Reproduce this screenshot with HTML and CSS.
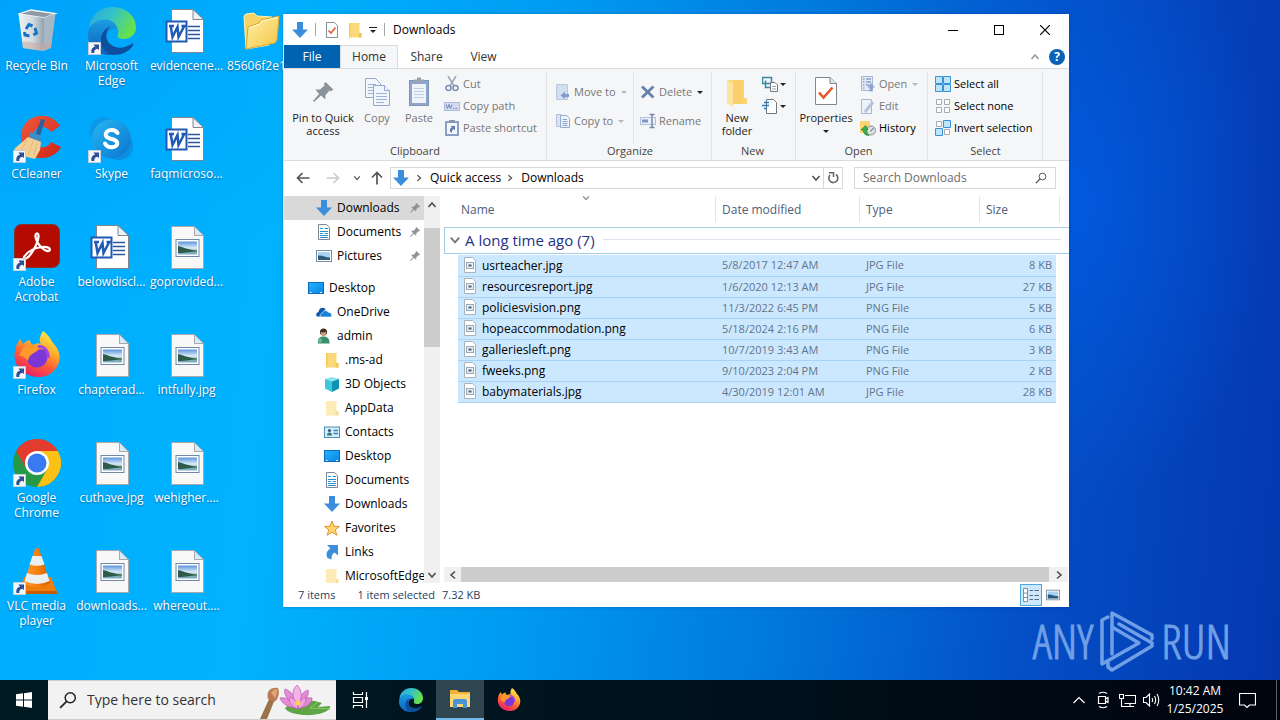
FILE: index.html
```html
<!DOCTYPE html>
<html lang="en">
<head>
<meta charset="utf-8">
<title>Downloads</title>
<link rel="stylesheet" href="styles.css">
</head>
<body>
<svg class="sprite" width="0" height="0" aria-hidden="true">
  <defs>
    <linearGradient id="gEdgeA" x1="0" y1="0" x2="1" y2="0.4"><stop offset="0" stop-color="#2aa7dd"/><stop offset=".5" stop-color="#33c3c9"/><stop offset="1" stop-color="#66e04f"/></linearGradient>
    <linearGradient id="gEdgeB" x1="0" y1="0" x2="0" y2="1"><stop offset="0" stop-color="#1b9de2"/><stop offset="1" stop-color="#0f5fb8"/></linearGradient>
    <linearGradient id="gBin" x1="0" y1="0" x2="1" y2="0"><stop offset="0" stop-color="#eef2f4"/><stop offset=".55" stop-color="#d3dadf"/><stop offset="1" stop-color="#93a3b1"/></linearGradient>
    <linearGradient id="gFold" x1="0" y1="0" x2="1" y2="1"><stop offset="0" stop-color="#fff2a8"/><stop offset="1" stop-color="#f3c443"/></linearGradient>
    <linearGradient id="gFox" x1=".8" y1="0" x2=".3" y2="1"><stop offset="0" stop-color="#fff04a"/><stop offset=".35" stop-color="#ffb02c"/><stop offset=".65" stop-color="#ff5b36"/><stop offset="1" stop-color="#e61b6d"/></linearGradient>
    <linearGradient id="gSkype" x1="0" y1="0" x2="1" y2="1"><stop offset="0" stop-color="#27b8f2"/><stop offset="1" stop-color="#0a74cf"/></linearGradient>
    <linearGradient id="gSky" x1="0" y1="0" x2="0" y2="1"><stop offset="0" stop-color="#5b93dc"/><stop offset=".5" stop-color="#dcecf8"/><stop offset=".75" stop-color="#7fb0a0"/><stop offset="1" stop-color="#7fa9d4"/></linearGradient>
    <linearGradient id="gDesk" x1="0" y1="0" x2="1" y2="1"><stop offset="0" stop-color="#22b5f7"/><stop offset="1" stop-color="#0b84e8"/></linearGradient>
    <linearGradient id="gCone" x1="0" y1="0" x2="1" y2="0"><stop offset="0" stop-color="#ff9a2e"/><stop offset=".6" stop-color="#f47b05"/><stop offset="1" stop-color="#d15c00"/></linearGradient>
    <linearGradient id="gRed" x1="0" y1="0" x2="1" y2="1"><stop offset="0" stop-color="#f05a3c"/><stop offset="1" stop-color="#cf2418"/></linearGradient>
  </defs>

  <symbol id="shortcut" viewBox="0 0 13 13"><rect x=".5" y=".5" width="12" height="12" fill="#f4f7fa" stroke="#c6ced8"/><path d="M3.500 11C2.800 7.500 4.500 5 7 4.800L5.500 2.500H11V8L9.300 6.700C7 7.200 6 8.500 6.300 11Z" fill="#2f4f96"/></symbol>

  <symbol id="bin" viewBox="0 0 48 48"><path d="M5.500 7 18 3 42.500 6.500 31 11Z" fill="#8e9aa5" stroke="#f3f6f8" stroke-width="1.300"/><path d="M5.500 7 31 11 30 44 10 41Z" fill="url(#gBin)"/><path d="M31 11 42.500 6.500 38 41 30 44Z" fill="#a9b7c4"/><path d="M9.500 34 30 37 38 34.500 37.500 41 30 44 10 41Z" fill="#c9a99c" opacity=".55"/><g fill="none" stroke="#1673c8" stroke-width="3"><path d="M13 22 16 17.500 19.500 19"/><path d="M22 21 23.500 26 20.500 28"/><path d="M16.500 29 12 28 11.500 25"/></g></symbol>

  <symbol id="edge" viewBox="0 0 48 48"><path d="M1 23C1 9 12 0 24.500 0 38 0 48 9 48 20.500 48 28 42 32 36 32 31 32 28.500 30 30 27 31.500 23 28 14 18 14 9 14 3 18 1 23Z" fill="url(#gEdgeA)"/><path d="M0 26C1 17 9 12.500 17 12.500 24 12.500 29 17 29 22 24 20 19 24 19 30 19 38 25 44 32 44 29 47 25 48 22 48 10 48-1 39 0 26Z" fill="url(#gEdgeB)"/><path d="M22 20C15 26 17 38 30 40.500 36 41.500 41 38.500 44 36.500 45 36 46 37 45 38.500 41 45 33 48 26 48 17 47 12 39 13 31 14 25 18 21 22 20Z" fill="#0c4f9c"/></symbol>

  <symbol id="word" viewBox="0 0 48 48"><path d="M8.500 2.500H30L40.500 12.500V45.500H8.500Z" fill="#fff" stroke="#7c8791"/><path d="M30 2.500V12.500H40.500Z" fill="#eef2f6" stroke="#7c8791"/><path d="M25 19.500H37M25 23.500H37M25 27.500H37M25 31.500H37" stroke="#2b579a" stroke-width="1.300"/><rect x="3.500" y="14.500" width="20" height="20" fill="#fff" stroke="#1f5bb5" stroke-width="2"/><path d="M6 19H11M7.800 19.500 9.500 30 14.500 20 15.500 30 21 19.500M18.500 19H23" stroke="#1f5bb5" stroke-width="2.500" fill="none"/></symbol>

  <symbol id="bigfolder" viewBox="0 0 48 48"><path d="M6 9 8 7 16 6 19 9 34 10 36 15 31 38 8 42Z" fill="#f5d365" stroke="#fff3b8"/><path d="M8 42 10 20 21 16 23 13 41 9 39 33 37 36Z" fill="url(#gFold)" stroke="#d9a72f"/><path d="M11 21 22 17 24 14 40 10.500" fill="none" stroke="#fffbe0"/></symbol>

  <symbol id="ccleaner" viewBox="0 0 48 48"><path d="M47 11C41 2 33 0 26 1 15 2 8 11 8 22 9 37 18 44 29 43 38 43 45 38 48 32L38 27C36 31 32 33 28 32 22 31 20 27 20 22 20 16 24 12 29 12 33 12 36 14 38 17Z" fill="url(#gRed)"/><path d="M28 4 32 5 27 21 22 20Z" fill="#2f5f98"/><path d="M16 17 27 20 29 28 18 26Z" fill="#3f8ec8"/><path d="M15 22 28 27 27 35 22 44 10 41 1 34Z" fill="#f3cf94"/><path d="M14 25 8 36M20 26 15 40M24 28 21 41" stroke="#e3b877"/></symbol>

  <symbol id="skype" viewBox="0 0 48 48"><circle cx="16" cy="16" r="14" fill="#0c98e8"/><circle cx="31" cy="31" r="14" fill="#0b90e2"/><circle cx="23.500" cy="24" r="19.500" fill="url(#gSkype)"/><path d="M29.500 18C28 15.500 25.500 14.800 23 15 19.500 15.200 17.500 17.300 17.800 20 18.200 25.500 29.500 22.500 29.300 28.500 29 33 19.500 34 17 28.500" fill="none" stroke="#fff" stroke-width="4" stroke-linecap="round"/></symbol>

  <symbol id="acrobat" viewBox="0 0 48 48"><rect x="1.500" y="1.500" width="45" height="43" rx="7" fill="#b30b00" stroke="#87322d"/><path d="M11 34C14 29 21 25 29 24 35 23.500 38 25.500 36.500 27.500 33 30 24 22 22.500 14 22 9 26 9 25.500 14 24.500 22 17 34 13 35.500 11.500 36 10.500 35 11 34Z" fill="none" stroke="#fff" stroke-width="2.200"/></symbol>

  <symbol id="firefox" viewBox="0 0 48 48"><path d="M30 0C36 4 38 9 40 12 45 17 48 24 46 31 43 41 34 47 24 46 11 45 1 36 1.500 23 2 17 4 12 7 8L10 13C13 10 16 9 17 9 17 11 18 13 20 14 24 12 26 12 28 13 25 9 28 3 30 0Z" fill="url(#gFox)"/><circle cx="24" cy="26" r="10.500" fill="#7c35d6"/><path d="M10 17C15 12 27 13 31 19 27 17 24 19 23 21 20 22 16 24 15 30 12 26 8 24 6 25Z" fill="#ff9a2a"/><path d="M25 16C30 14 36 20 35 27" stroke="#a044e6" stroke-width="3" fill="none"/></symbol>

  <symbol id="chrome" viewBox="0 0 48 48"><circle cx="24" cy="24" r="24" fill="#279847"/><path d="M3.200 12A24 24 0 0 1 44.800 12H24L13.600 30Z" fill="#e33b2e"/><path d="M24 12H44.800A24 24 0 0 1 24 48L34.400 30Z" fill="#fbc116"/><circle cx="24" cy="24" r="12" fill="#fff"/><circle cx="24" cy="24" r="9.500" fill="#3a7af0"/></symbol>

  <symbol id="vlc" viewBox="0 0 48 48"><path d="M11 30H38L44 46H5Z" fill="#ef7c0c"/><path d="M5 44H44V47H5Z" fill="#c75b00"/><path d="M22 2Q24 0 26 2L37 36Q24 44 11 36Z" fill="url(#gCone)"/><path d="M19.500 9H28.500L31.500 17.500Q24 20 16.500 17.500Z" fill="#eceff2"/><path d="M14 26Q24 30 34 26L36.500 34Q24 40 11.500 34Z" fill="#eceff2"/></symbol>

  <symbol id="image" viewBox="0 0 48 48"><path d="M8.500 3.500H31.500L40.500 12.500V45.500H8.500Z" fill="#f8f8f9" stroke="#a9a9ad"/><path d="M31.500 3.500V12.500H40.500Z" fill="#d5ecf8" stroke="#a9a9ad"/><rect x="13" y="16.500" width="23" height="17" fill="#fff" stroke="#7287a4"/><rect x="15" y="18.500" width="19" height="13" fill="url(#gSky)"/><path d="M15 23C20 24 25 27 34 27.500V28.500C27 28.500 24 30 15 30Z" fill="#2c5c48"/></symbol>

  <symbol id="down" viewBox="0 0 16 16"><path d="M5 0H11V7.500H16L8 16 0 7.500H5Z" fill="#3b8edb"/></symbol>
  <symbol id="folder" viewBox="0 0 16 16"><path d="M2 1H12.500V11H14.500V15.500H2Z" fill="#fbd978"/><path d="M2 1H3.500V15.500H2Z" fill="#f3ca5c"/><path d="M11.500 11H14.500V15.500H11.500Z" fill="#f0c65a"/></symbol>
  <symbol id="palefolder" viewBox="0 0 16 16"><path d="M2 1H12.500V11H14.500V15.500H2Z" fill="#fdebb8"/><path d="M11.500 11H14.500V15.500H11.500Z" fill="#f6dfa3"/></symbol>
  <symbol id="doc" viewBox="0 0 16 16"><path d="M2.500.5H10.500L13.500 3.500V15.500H2.500Z" fill="#fff" stroke="#7b8791"/><path d="M4 4.500H7M8.500 4.500H12M4 7.500H12M4 9.500H7M8.500 9.500H12M4 11.500H12M4 13.500H12" stroke="#2e8ecb"/></symbol>
  <symbol id="pic" viewBox="0 0 16 16"><rect x=".5" y="2.500" width="15" height="11" fill="#fff" stroke="#7b8da0"/><rect x="2" y="4" width="12" height="8" fill="#a8d3f2"/><path d="M2 7.500C6 7 10 9.500 14 9.500V12H2Z" fill="#2b5a7d"/></symbol>
  <symbol id="desk" viewBox="0 0 16 16"><rect x=".5" y="2.500" width="15" height="11" fill="url(#gDesk)" stroke="#0a6cc0"/><path d="M2 12.500H3.500M12 12.500H14" stroke="#fff"/></symbol>
  <symbol id="cloud" viewBox="0 0 16 16"><path d="M1 12.500C-.5 11 .2 8.500 2.500 8 3 4 7 2.500 9.500 5L5.500 12.500Z" fill="#0a57ae"/><path d="M5 13C3.500 11.500 4.300 9.300 6.300 9 7 6.500 10.500 5.500 12.200 8.300 15 8 16.500 11 15.200 13Z" fill="#1584dc" stroke="#fff" stroke-width=".6"/></symbol>
  <symbol id="user" viewBox="0 0 16 16"><circle cx="7.500" cy="4" r="3.500" fill="#3e2f27"/><path d="M5 4Q8 5 10 3.500V6Q9.500 8 7.500 8 5.300 8 5 6Z" fill="#d19c75"/><path d="M2 15.500C1.500 10 4 8.500 7.500 8.500 11.500 8.500 13.500 10.500 13.500 15.500Z" fill="#38906a"/><circle cx="4" cy="12.500" r="2.200" fill="#6bb594"/></symbol>
  <symbol id="cube" viewBox="0 0 16 16"><path d="M0 3 8 1 16 3 8 5.500Z" fill="#8ce6f0"/><path d="M1 3 8 5.500V16L1 12.500Z" fill="#3fc6dc"/><path d="M8 5.500 15 3V12.500L8 16Z" fill="#0f93b4"/></symbol>
  <symbol id="contact" viewBox="0 0 16 16"><rect x=".5" y="3" width="15" height="10.500" fill="#d4effb" stroke="#4b8fb5"/><circle cx="5.500" cy="6.500" r="1.600" fill="#305b76"/><path d="M3 11.500Q3 8.500 5.500 8.500T8 11.500Z" fill="#2b7b80"/><path d="M9.500 6.500H14M9.500 9.500H14" stroke="#3184b6" stroke-width="1.300"/></symbol>
  <symbol id="star" viewBox="0 0 16 16"><path d="M8 1 10 6.200 15.500 6.500 11.300 9.800 12.800 15.300 8 12.200 3.200 15.300 4.700 9.800.5 6.500 6 6.200Z" fill="#ffd667" stroke="#e5903a"/></symbol>
  <symbol id="link" viewBox="0 0 16 16"><path d="M3 1H14V11.500L10.500 8.500C8 10 7.500 12 7.500 15.500L3.500 14C1.500 9.500 3 6.500 6.500 4.500Z" fill="#3b8edb"/></symbol>
  <symbol id="pin" viewBox="0 0 12 12"><path d="M7.300 1 11.200 4.700 9.900 5.600 9.200 5.300 7.200 7.600 7.200 9.800 5 7.800 1.500 11 1 10.500 4 7 2.200 4.800 4.500 4.700 6.800 2.700 6.400 2Z" fill="#8b9299"/></symbol>
  <symbol id="fileimg" viewBox="0 0 14 16"><path d="M1.500.5H9.500L12.500 3.500V15.500H1.500Z" fill="#fff" stroke="#a9b3bb"/><rect x="3.500" y="5.500" width="7" height="6" fill="#e6eff6" stroke="#9aa7b5"/><rect x="5.500" y="7.500" width="3" height="2" fill="#46617c"/></symbol>
  <symbol id="check" viewBox="0 0 16 16"><path d="M2.500.5H10.500L13.500 3.500V15.500H2.500Z" fill="#fff" stroke="#86909a"/><path d="M4.500 8.500 7 11 11.500 5.500" stroke="#e0603a" stroke-width="1.700" fill="none"/></symbol>
  <symbol id="checkbig" viewBox="0 0 24 32"><path d="M1.500 1.500H16L22.500 7.500V28.500H1.500Z" fill="#fff" stroke="#80868c"/><path d="M16 1.500V7.500H22.500" fill="#e4e7ea" stroke="#80868c"/><path d="M5 16.500 9.500 21.500 18.500 11.500" stroke="#e4572b" stroke-width="2.600" fill="none"/></symbol>
  <symbol id="copybig" viewBox="0 0 26 32"><g fill="#f1f5fc" stroke="#96a9cc"><path d="M1.500 2.500H11.500L16.500 7.500V21.500H1.500Z"/><path d="M9.500 9.500H20.500L25.500 14.500V29.500H9.500Z"/><path d="M20.500 9.500V14.500H25.500"/></g><path d="M4 8.500H12M4 11.500H9M4 14.500H9M4 17.500H9M12 17.500H23M12 20.500H23M12 23.500H23M12 26.500H20" stroke="#9fb2d6"/></symbol>
  <symbol id="pastebig" viewBox="0 0 24 32"><rect x="2.500" y="4.500" width="19" height="25" fill="#8fa5c9" stroke="#7d94bb"/><rect x="5" y="8" width="14" height="19" fill="#eff4fb"/><path d="M7 6V3.500H10V1.500H14V3.500H17V6Z" fill="#9aa4b1"/><path d="M7 12.500H17M7 15.500H17M7 18.500H17M7 21.500H17" stroke="#c0cde2"/></symbol>
  <symbol id="scissors" viewBox="0 0 16 16"><path d="M4 0 10 10M12 0 6 10" stroke="#9aa7b8" stroke-width="1.500"/><circle cx="4.500" cy="12" r="2.500" fill="none" stroke="#7d93b5" stroke-width="1.600"/><circle cx="11.500" cy="12" r="2.500" fill="none" stroke="#7d93b5" stroke-width="1.600"/></symbol>
  <symbol id="path" viewBox="0 0 16 16"><rect x=".5" y="4.500" width="15" height="8" fill="#d2dcef" stroke="#aebddb"/><path d="M2 6.500 3.500 10.500 5 6.500 6.500 10.500 8 6.500M9 10.500H10.500M11.500 10.500H13" stroke="#6c85b4" fill="none"/></symbol>
  <symbol id="pshort" viewBox="0 0 16 16"><rect x="2" y="2" width="12" height="13" fill="#f4f7fc" stroke="#7f97c0" stroke-width="1.800"/><rect x="5" y="0" width="6" height="3" fill="#8796ae"/><path d="M6 12C5.500 9 6.500 8 8 7.500L6.500 6H11V10.500L9.700 9C8.500 9.500 8 10.500 8 12.500Z" fill="#5b79b3"/></symbol>
  <symbol id="moveto" viewBox="0 0 16 16"><path d="M1.500.5H12.500V15.500H1.500Z" fill="#d3def1" stroke="#b9c7e1"/><path d="M14 10H10V7.500L5.500 11.500 10 15V13H14Z" fill="#7f9acb"/></symbol>
  <symbol id="copyto" viewBox="0 0 16 16"><path d="M1.500 1.500H6V13.500H1.500Z" fill="#dbe4f3" stroke="#b0c0dd"/><path d="M5.500 2.500H11.500L14.500 5.500V14.500H5.500Z" fill="#f0f4fb" stroke="#95a8cd"/><path d="M7.500 6.500H12M7.500 8.500H12.500M7.500 10.500H12.500M7.500 12.500H12.500" stroke="#8ba1cb"/></symbol>
  <symbol id="xmark" viewBox="0 0 16 16"><path d="M2 2.500 13.500 13.500M13.500 2.500 2 13.500" stroke="#6480ab" stroke-width="2.800"/></symbol>
  <symbol id="rename" viewBox="0 0 16 16"><rect x=".5" y="4.500" width="15" height="7" fill="#e9effa" stroke="#b2c1de"/><rect x="2" y="6.500" width="6" height="3" fill="#7d96c6"/><path d="M9.500 1.500H14.500M9.500 14.500H14.500M12 1.500V14.500" stroke="#7587a7" stroke-width="1.400"/></symbol>
  <symbol id="newfolder" viewBox="0 0 24 32"><path d="M3 4H19V22H22V28H3Z" fill="#fbd574"/><path d="M2 4 8 7V31L2 27Z" fill="#fde39d"/><path d="M8 6 10 4H18V28H8Z" fill="#fad06b"/></symbol>
  <symbol id="newitem" viewBox="0 0 16 16"><path d="M.5 1.500H9.500V7.500H.5ZM3.500 4.500V11.500H8" fill="none" stroke="#3886a6" stroke-width="1.500"/><path d="M8.500 6.500H13L15.500 9V15.500H8.500Z" fill="#fff" stroke="#717a82"/><path d="M10 10.500H14M10 13H14" stroke="#9aa1a8"/></symbol>
  <symbol id="easy" viewBox="0 0 16 16"><path d="M4.500 1.500H11.500L14.500 4.500V15.500H4.500Z" fill="#fff" stroke="#70777d"/><path d="M2 4.500H7M0 7.500H7M2 10.500H5" stroke="#2b78b6" stroke-width="1.500"/></symbol>
  <symbol id="openic" viewBox="0 0 16 16"><path d="M1.500.5H12.500V14.500H1.500Z" fill="#e4ebf7" stroke="#a5b5d4"/><path d="M3 3H4.500M6 3H11M3 6H4.500M6 6H11M3 9H4.500M6 9H9M3 12H4.500" stroke="#8ca1cb" stroke-width="1.500"/><path d="M11 7 15 11.500H12.500V15.500H9.500V11.500H7.500Z" fill="#8fa5cd"/></symbol>
  <symbol id="edit" viewBox="0 0 16 16"><path d="M1.500 1.500H11.500V15.500H1.500Z" fill="#edf2fa" stroke="#a8b7d3"/><path d="M5 14 13 4" stroke="#b3c2df" stroke-width="3"/></symbol>
  <symbol id="history" viewBox="0 0 16 16"><path d="M0 1H10V13H0Z" fill="#fbd56f"/><circle cx="11" cy="10.500" r="4.500" fill="#dde0e2" stroke="#898f94"/><path d="M10.500 11.500 13.500 8" stroke="#586168"/><path d="M1 10 5.500 5.500 8 9.500 6.500 9.700Q6 13 9 15.500 3.500 15.500 3.300 10Z" fill="#35b04a" stroke="#228138" stroke-width=".7"/></symbol>
  <symbol id="selall" viewBox="0 0 16 16"><path d="M.5.5H7.500V7.500H.5ZM8.500.5H15.500V7.500H8.500ZM.5 8.500H7.500V15.500H.5ZM8.500 8.500H15.500V15.500H8.500Z" fill="#bfe3fb" stroke="#3393d6"/></symbol>
  <symbol id="selnone" viewBox="0 0 16 16"><path d="M1.500 1.500H6.500V6.500H1.500ZM9.500 1.500H14.500V6.500H9.500ZM1.500 9.500H6.500V14.500H1.500ZM9.500 9.500H14.500V14.500H9.500Z" fill="#fff" stroke="#a5abb0"/></symbol>
  <symbol id="selinv" viewBox="0 0 16 16"><path d="M1.500 1.500H6.500V6.500H1.500ZM9.500 9.500H14.500V14.500H9.500Z" fill="#fff" stroke="#a5abb0"/><path d="M8.500.5H15.500V7.500H8.500ZM.5 8.500H7.500V15.500H.5Z" fill="#bfe3fb" stroke="#3393d6"/></symbol>
  <symbol id="arrow" viewBox="0 0 14 12"><path d="M13.500 6H2M6.500 1 1.500 6 6.500 11" fill="none" stroke="currentColor" stroke-width="1.700"/></symbol>
  <symbol id="chev" viewBox="0 0 10 10"><path d="M1.500 3 5 7 8.500 3" fill="none" stroke="currentColor" stroke-width="1.600"/></symbol>
  <symbol id="lens" viewBox="0 0 16 16"><circle cx="10" cy="6" r="4.500" fill="none" stroke="currentColor" stroke-width="1.300"/><path d="M7 9 1 15" stroke="currentColor" stroke-width="1.500"/></symbol>
  <symbol id="explorer" viewBox="0 0 24 24"><path d="M2 3H9L11 5H22V20H2Z" fill="#f0b234"/><path d="M2 7H22V20H2Z" fill="#fcd773"/><path d="M5 21V14Q5 12 7 12H17Q19 12 19 14V21H15V17H9V21Z" fill="#4a93d6"/></symbol>
</svg>

<main class="desktop">
  <div class="icons">
    <button class="icon"><span class="art"><svg><use href="#bin"/></svg></span><span class="name">Recycle Bin</span></button>
    <button class="icon"><span class="art"><svg><use href="#ccleaner"/></svg><svg class="sc"><use href="#shortcut"/></svg></span><span class="name">CCleaner</span></button>
    <button class="icon"><span class="art"><svg><use href="#acrobat"/></svg><svg class="sc"><use href="#shortcut"/></svg></span><span class="name">Adobe<br>Acrobat</span></button>
    <button class="icon"><span class="art"><svg><use href="#firefox"/></svg><svg class="sc"><use href="#shortcut"/></svg></span><span class="name">Firefox</span></button>
    <button class="icon"><span class="art"><svg><use href="#chrome"/></svg><svg class="sc"><use href="#shortcut"/></svg></span><span class="name">Google<br>Chrome</span></button>
    <button class="icon"><span class="art"><svg><use href="#vlc"/></svg><svg class="sc"><use href="#shortcut"/></svg></span><span class="name">VLC media<br>player</span></button>
    <button class="icon"><span class="art"><svg><use href="#edge"/></svg><svg class="sc"><use href="#shortcut"/></svg></span><span class="name">Microsoft<br>Edge</span></button>
    <button class="icon"><span class="art"><svg><use href="#skype"/></svg><svg class="sc"><use href="#shortcut"/></svg></span><span class="name">Skype</span></button>
    <button class="icon"><span class="art"><svg><use href="#word"/></svg></span><span class="name">belowdiscl...</span></button>
    <button class="icon"><span class="art"><svg><use href="#image"/></svg></span><span class="name">chapterad...</span></button>
    <button class="icon"><span class="art"><svg><use href="#image"/></svg></span><span class="name">cuthave.jpg</span></button>
    <button class="icon"><span class="art"><svg><use href="#image"/></svg></span><span class="name">downloads...</span></button>
    <button class="icon"><span class="art"><svg><use href="#word"/></svg></span><span class="name">evidencene...</span></button>
    <button class="icon"><span class="art"><svg><use href="#word"/></svg></span><span class="name">faqmicroso...</span></button>
    <button class="icon"><span class="art"><svg><use href="#image"/></svg></span><span class="name">goprovided...</span></button>
    <button class="icon"><span class="art"><svg><use href="#image"/></svg></span><span class="name">intfully.jpg</span></button>
    <button class="icon"><span class="art"><svg><use href="#image"/></svg></span><span class="name">wehigher....</span></button>
    <button class="icon"><span class="art"><svg><use href="#image"/></svg></span><span class="name">whereout....</span></button>
    <button class="icon last"><span class="art"><svg><use href="#bigfolder"/></svg></span><span class="name">85606f2e1c...</span></button>
  </div>

  <div class="watermark">
    <span>ANY</span>
    <svg width="56" height="62" viewBox="0 0 56 62" fill="none" stroke="currentColor" stroke-width="3.500" stroke-linejoin="round" stroke-linecap="round"><path d="M9 7 3 10V54L40 33 13 17"/><path d="M13 44V3L53 25V29M9 52V57L13 60 53 36V33L20 14"/></svg>
    <span>RUN</span>
  </div>

  <section class="window" aria-label="Downloads">
    <header class="titlebar">
      <svg class="i16"><use href="#down"/></svg><i class="bar"></i>
      <button class="plain qa" aria-label="Properties"><svg class="i16"><use href="#check"/></svg></button>
      <button class="plain qb" aria-label="New folder"><svg class="i16"><use href="#folder"/></svg></button>
      <button class="plain" aria-label="Customize"><svg width="8" height="8" viewBox="0 0 8 8"><path d="M0 1.500H8" stroke="#222"/><path d="M1 4H7L4 7Z" fill="#222"/></svg></button>
      <i class="bar"></i>
      <span class="caption">Downloads</span>
      <div class="winbtns">
        <button class="plain" aria-label="Minimize"><svg width="10" height="10"><path d="M0 5.500H10" stroke="#000"/></svg></button>
        <button class="plain" aria-label="Maximize"><svg width="10" height="10"><rect x=".5" y=".5" width="9" height="9" fill="none" stroke="#000"/></svg></button>
        <button class="plain" aria-label="Close"><svg width="10" height="10"><path d="M0 0 10 10M10 0 0 10" stroke="#000" stroke-width="1.200"/></svg></button>
      </div>
    </header>

    <nav class="tabs">
      <button class="tab file">File</button><button class="tab active">Home</button><button class="tab">Share</button><button class="tab">View</button>
      <span class="grow"></span>
      <button class="plain collapse" aria-label="Collapse ribbon"><svg class="i10 flip"><use href="#chev"/></svg></button>
      <button class="help" aria-label="Help">?</button>
    </nav>

    <div class="ribbon">
      <div class="group clip">
        <div class="tools">
          <button class="big w66"><svg width="28" height="32" viewBox="-1 -2 14 16"><use href="#pin" width="12" height="12"/></svg>Pin to Quick<br>access</button>
          <button class="big w42 off"><svg width="26" height="32"><use href="#copybig"/></svg>Copy</button>
          <button class="big w42 off"><svg width="24" height="32"><use href="#pastebig"/></svg>Paste</button>
          <div class="stack">
            <button class="small off"><svg class="i16"><use href="#scissors"/></svg>Cut</button>
            <button class="small off"><svg class="i16"><use href="#path"/></svg>Copy path</button>
            <button class="small off"><svg class="i16"><use href="#pshort"/></svg>Paste shortcut</button>
          </div>
        </div>
        <div class="title">Clipboard</div>
      </div>
      <div class="group org">
        <div class="tools">
          <div class="stack wide">
            <button class="small off"><svg class="i16"><use href="#moveto"/></svg>Move to<i class="drop pale"></i></button>
            <button class="small off"><svg class="i16"><use href="#copyto"/></svg>Copy to<i class="drop pale"></i></button>
          </div>
          <div class="stack wide ruled">
            <button class="small off"><svg class="i16"><use href="#xmark"/></svg>Delete<i class="drop"></i></button>
            <button class="small off"><svg class="i16"><use href="#rename"/></svg>Rename</button>
          </div>
        </div>
        <div class="title">Organize</div>
      </div>
      <div class="group new">
        <div class="tools">
          <button class="big w42"><svg width="24" height="32"><use href="#newfolder"/></svg>New<br>folder</button>
          <div class="stack">
            <button class="small tight" aria-label="New item"><svg class="i16"><use href="#newitem"/></svg><i class="drop"></i></button>
            <button class="small tight" aria-label="Easy access"><svg class="i16"><use href="#easy"/></svg><i class="drop"></i></button>
          </div>
        </div>
        <div class="title">New</div>
      </div>
      <div class="group open">
        <div class="tools">
          <button class="big w60"><svg width="24" height="32"><use href="#checkbig"/></svg>Properties<i class="drop"></i></button>
          <div class="stack">
            <button class="small off"><svg class="i16"><use href="#openic"/></svg>Open<i class="drop pale"></i></button>
            <button class="small off"><svg class="i16"><use href="#edit"/></svg>Edit</button>
            <button class="small"><svg class="i16"><use href="#history"/></svg>History</button>
          </div>
        </div>
        <div class="title">Open</div>
      </div>
      <div class="group sel">
        <div class="tools">
          <div class="stack flush">
            <button class="small"><svg class="i16"><use href="#selall"/></svg>Select all</button>
            <button class="small"><svg class="i16"><use href="#selnone"/></svg>Select none</button>
            <button class="small"><svg class="i16"><use href="#selinv"/></svg>Invert selection</button>
          </div>
        </div>
        <div class="title">Select</div>
      </div>
    </div>

    <div class="address">
      <button class="plain arr" aria-label="Back"><svg width="14" height="12"><use href="#arrow"/></svg></button>
      <button class="plain arr dim" aria-label="Forward"><svg class="mirror" width="14" height="12"><use href="#arrow"/></svg></button>
      <button class="plain recent" aria-label="Recent locations"><svg class="i8"><use href="#chev"/></svg></button>
      <button class="plain up" aria-label="Up"><svg width="12" height="14" viewBox="0 0 12 14"><path d="M6 13.500V2M1 6.500 6 1.500 11 6.500" fill="none" stroke="currentColor" stroke-width="1.700"/></svg></button>
      <div class="crumbs">
        <svg class="i16"><use href="#down"/></svg>
        <svg class="i8 right"><use href="#chev"/></svg><a href="#quick">Quick access</a>
        <svg class="i8 right"><use href="#chev"/></svg><a href="#downloads">Downloads</a>
        <span class="grow"></span>
        <button class="plain hist" aria-label="Previous locations"><svg class="i10"><use href="#chev"/></svg></button>
        <button class="plain refresh" aria-label="Refresh"><svg width="12" height="12" viewBox="0 0 12 12"><path d="M9 2.500A4.500 4.500 0 1 1 3 3" fill="none" stroke="#666" stroke-width="1.600"/><path d="M2 .8H6.500V5" fill="none" stroke="#666" stroke-width="1.500"/></svg></button>
      </div>
      <label class="find"><input type="search" placeholder="Search Downloads" aria-label="Search Downloads"><svg class="i12"><use href="#lens"/></svg></label>
    </div>

    <div class="content">
      <nav class="tree">
        <a href="#d" class="l1 on"><svg class="i16"><use href="#down"/></svg><span>Downloads</span><svg class="pin"><use href="#pin"/></svg></a>
        <a href="#d" class="l1"><svg class="i16"><use href="#doc"/></svg><span>Documents</span><svg class="pin"><use href="#pin"/></svg></a>
        <a href="#d" class="l1"><svg class="i16"><use href="#pic"/></svg><span>Pictures</span><svg class="pin"><use href="#pin"/></svg></a>
        <a href="#d" class="l0"><svg class="i16"><use href="#desk"/></svg><span>Desktop</span></a>
        <a href="#d" class="l1"><svg class="i16"><use href="#cloud"/></svg><span>OneDrive</span></a>
        <a href="#d" class="l1"><svg class="i16"><use href="#user"/></svg><span>admin</span></a>
        <a href="#d" class="l2"><svg class="i16"><use href="#folder"/></svg><span>.ms-ad</span></a>
        <a href="#d" class="l2"><svg class="i16"><use href="#cube"/></svg><span>3D Objects</span></a>
        <a href="#d" class="l2"><svg class="i16"><use href="#palefolder"/></svg><span>AppData</span></a>
        <a href="#d" class="l2"><svg class="i16"><use href="#contact"/></svg><span>Contacts</span></a>
        <a href="#d" class="l2"><svg class="i16"><use href="#desk"/></svg><span>Desktop</span></a>
        <a href="#d" class="l2"><svg class="i16"><use href="#doc"/></svg><span>Documents</span></a>
        <a href="#d" class="l2"><svg class="i16"><use href="#down"/></svg><span>Downloads</span></a>
        <a href="#d" class="l2"><svg class="i16"><use href="#star"/></svg><span>Favorites</span></a>
        <a href="#d" class="l2"><svg class="i16"><use href="#link"/></svg><span>Links</span></a>
        <a href="#d" class="l2"><svg class="i16"><use href="#palefolder"/></svg><span>MicrosoftEdge</span></a>
      </nav>
      <div class="vscroll">
        <button class="plain" aria-label="Scroll up"><svg class="i10 flip"><use href="#chev"/></svg></button>
        <div class="track"><div class="thumb"></div></div>
        <button class="plain" aria-label="Scroll down"><svg class="i10"><use href="#chev"/></svg></button>
      </div>
      <div class="files">
        <div class="listing">
          <table>
            <colgroup><col class="c-edge"><col><col class="c-date"><col class="c-type"><col class="c-size"><col class="c-gap"><col class="c-end"></colgroup>
            <thead><tr><th></th><th class="hname">Name<svg class="sort i8"><use href="#chev"/></svg></th><th class="sep">Date modified</th><th class="sep">Type</th><th class="sep">Size</th><th></th><th class="sep"></th></tr></thead>
            <tbody>
              <tr class="ghead"><th colspan="7" scope="rowgroup"><button><svg class="i12"><use href="#chev"/></svg><span>A long time ago (7)</span><i></i></button></th></tr>
              <tr><td></td><td><svg class="fi"><use href="#fileimg"/></svg>usrteacher.jpg</td><td>5/8/2017 12:47 AM</td><td>JPG File</td><td>8 KB</td><td></td><td></td></tr>
              <tr><td></td><td><svg class="fi"><use href="#fileimg"/></svg>resourcesreport.jpg</td><td>1/6/2020 12:13 AM</td><td>JPG File</td><td>27 KB</td><td></td><td></td></tr>
              <tr><td></td><td><svg class="fi"><use href="#fileimg"/></svg>policiesvision.png</td><td>11/3/2022 6:45 PM</td><td>PNG File</td><td>5 KB</td><td></td><td></td></tr>
              <tr><td></td><td><svg class="fi"><use href="#fileimg"/></svg>hopeaccommodation.png</td><td>5/18/2024 2:16 PM</td><td>PNG File</td><td>6 KB</td><td></td><td></td></tr>
              <tr><td></td><td><svg class="fi"><use href="#fileimg"/></svg>galleriesleft.png</td><td>10/7/2019 3:43 AM</td><td>PNG File</td><td>3 KB</td><td></td><td></td></tr>
              <tr><td></td><td><svg class="fi"><use href="#fileimg"/></svg>fweeks.png</td><td>9/10/2023 2:04 PM</td><td>PNG File</td><td>2 KB</td><td></td><td></td></tr>
              <tr><td></td><td><svg class="fi"><use href="#fileimg"/></svg>babymaterials.jpg</td><td>4/30/2019 12:01 AM</td><td>JPG File</td><td>28 KB</td><td></td><td></td></tr>
            </tbody>
          </table>
        </div>
        <div class="hscroll">
          <button class="plain" aria-label="Scroll left"><svg class="i10 left"><use href="#chev"/></svg></button>
          <div class="thumb"></div>
          <button class="plain" aria-label="Scroll right"><svg class="i10 right"><use href="#chev"/></svg></button>
        </div>
      </div>
    </div>

    <footer class="status">
      <span class="count">7 items</span><span class="chosen">1 item selected</span><span>7.32 KB</span>
      <span class="grow"></span>
      <button class="view active" aria-label="Details view"><svg width="16" height="14" viewBox="0 0 16 14"><path d="M.5.5H4.500V13.500H.5ZM.5 5H4.500M.5 9.500H4.500" fill="#fff" stroke="#8b8f94"/><path d="M6.500 2.500H10M11.500 2.500H16M6.500 7.500H10M11.500 7.500H16M6.500 11.500H10M11.500 11.500H16" stroke="#5c6c78"/></svg></button>
      <button class="view" aria-label="Large icons view"><svg width="14" height="14"><use href="#pic"/></svg></button>
    </footer>
  </section>
</main>

<footer class="taskbar">
  <button class="tb start" aria-label="Start"><svg width="16" height="16" viewBox="0 0 16 16"><path d="M0 2.300 7 1.300V7.500H0ZM8 1.200 16 0V7.500H8ZM0 8.500H7V14.700L0 13.700ZM8 8.500H16V16L8 14.800Z" fill="#fff"/></svg></button>
  <label class="search">
    <svg width="18" height="18"><use href="#lens"/></svg>
    <input type="search" placeholder="Type here to search" aria-label="Type here to search">
    <svg class="lily" width="72" height="38" viewBox="0 0 72 38">
      <path d="M0 38 10 16 15 18 7 38Z" fill="#9a7348"/><path d="M8 18C6 11 10 6 18 7 20 12 18 19 14 21Z" fill="#b87c50"/><path d="M11 12Q13 8 17 8 18 12 15 17Z" fill="#e0a27a"/>
      <path d="M25 27C34 17 52 18 62 22L58 26 70 25C71 31 56 35 43 34 34 33 27 31 25 27Z" fill="#5da545"/><path d="M58 21 50 27 70 28" fill="none" stroke="#8cca5f"/>
      <g fill="#e58bd6" stroke="#bd59b1" stroke-width=".7"><path d="M37 27C27 27 21 21 20 17 28 16 34 20 37 27Z"/><path d="M37 25C27 20 23 12 25 8 33 11 36 17 37 25Z"/><path d="M38 27C48 27 52 21 52 17 45 16 41 20 38 27Z"/><path d="M38 25C48 20 49 12 48 9 42 11 38 17 38 25Z"/><path d="M38 25C31 17 32 8 37 4 42 9 43 17 38 25Z" fill="#f4b3e6"/><path d="M38 28C31 26 28 20 30 16 35 18 38 22 38 28ZM38 28C45 26 47 20 45 16 41 18 38 22 38 28Z" fill="#f0a2df"/></g><circle cx="38" cy="22" r="2.500" fill="#f8d34b"/>
    </svg>
  </label>
  <button class="tb view3" aria-label="Task view"><svg width="18" height="18" viewBox="0 0 18 18"><path d="M2.500 1V3.500H11.500V1M2.500 17V14.500H11.500V17M2.500 6.500H11.500V11.500H2.500ZM15.500 1V17" fill="none" stroke="#fff" stroke-width="1.200"/><rect x="14" y="6" width="3" height="3" fill="#fff"/></svg></button>
  <button class="tb" aria-label="Microsoft Edge"><svg width="24" height="24"><use href="#edge"/></svg></button>
  <button class="tb running" aria-label="File Explorer"><svg width="24" height="24"><use href="#explorer"/></svg></button>
  <button class="tb" aria-label="Firefox"><svg width="24" height="24"><use href="#firefox"/></svg></button>
  <span class="grow"></span>
  <button class="tray" aria-label="Show hidden icons"><svg width="12" height="8" viewBox="0 0 12 8"><path d="M.5 7 6 1.500 11.500 7" fill="none" stroke="#fff" stroke-width="1.200"/></svg></button>
  <button class="tray" aria-label="Meet now"><svg width="12" height="18" viewBox="0 0 12 18"><path d="M1.500 5.500H8.500V12.500H1.500ZM8.500 8 11 6.500V11.500L8.500 10M2 2.500Q6 0 10 2.500M2 15.500Q6 18 10 15.500" fill="none" stroke="#fff" stroke-width="1.200"/></svg></button>
  <button class="tray" aria-label="Network"><svg width="17" height="15" viewBox="0 0 17 15"><path d="M6 2.500H16.500V10.500H5.500M11 10.500V13.500M7 13.500H15M.5 1.500H4.500V5.500H.5ZM2.500 5.500V13.500H7" fill="none" stroke="#fff" stroke-width="1.100"/></svg></button>
  <button class="tray" aria-label="Volume"><svg width="17" height="14" viewBox="0 0 17 14"><path d="M.5 4.500H3L6.500 1V13L3 9.500H.5ZM9 5Q10.200 7 9 9M11.500 3Q13.800 7 11.500 11M14 1Q17.500 7 14 13" fill="none" stroke="#fff" stroke-width="1.100"/></svg></button>
  <button class="clock">10:42 AM<br>1/25/2025</button>
  <button class="notes" aria-label="Notifications"><svg width="17" height="17" viewBox="0 0 17 17"><path d="M.5 1.500H16.500V13H10.500L8 15.500 5.500 13H.5Z" fill="none" stroke="#fff" stroke-width="1.200"/></svg></button>
</footer>
</body>
</html>
```
FILE: styles.css
```css
* { box-sizing: border-box; }
body {
  margin: 0;
  height: 100vh;
  display: flex;
  flex-direction: column;
  overflow: hidden;
  font: 12px/16px "Open Sans", "Noto Sans", sans-serif;
  color: #000;
}
button, input { font: inherit; color: inherit; border: 0; padding: 0; margin: 0; background: none; }
a { color: inherit; text-decoration: none; }
svg { display: block; flex: none; }
.sprite { position: absolute; }
.grow { flex: 1; }
.plain { display: flex; align-items: center; justify-content: center; }
.i8 { width: 8px; height: 8px; }
.i10 { width: 10px; height: 10px; }
.i12 { width: 12px; height: 12px; }
.i16 { width: 16px; height: 16px; }
.flip { transform: rotate(180deg); }
.right { transform: rotate(-90deg); }
.left { transform: rotate(90deg); }
.mirror { transform: scaleX(-1); }

/* Desktop */
.desktop {
  flex: 1;
  min-height: 0;
  position: relative;
  background:
    radial-gradient(ellipse 200px 300px at 84% 30%, rgba(0, 100, 245, .5), transparent),
    radial-gradient(ellipse 420px 300px at 0 0, rgba(0, 140, 240, .35), transparent),
    linear-gradient(95deg, #00aeff 0%, #00b2ff 22%, #009bf2 42%, #0078dc 62%, #0450c6 80%, #0437b0 100%);
}
.icons {
  display: grid;
  grid-auto-flow: column;
  grid-template-rows: repeat(6, 108px);
  grid-auto-columns: 75px;
}
.icon {
  display: flex;
  flex-direction: column;
  align-items: center;
  padding: 7px 2px 0 0;
  color: #fff;
  white-space: nowrap;
  line-height: 15px;
  text-shadow: 0 1px 2px rgba(0, 40, 90, .6);
}
.last .name { padding-left: 5px; }
.art { position: relative; margin-bottom: 3px; }
.art svg { width: 48px; height: 48px; }
.art .sc { position: absolute; left: 0; bottom: 0; width: 13px; height: 13px; }
.watermark {
  position: absolute;
  right: 49px;
  bottom: 8px;
  display: flex;
  align-items: center;
  gap: 6px;
  color: #6f9fe6;
  font: 300 48px/62px "Open Sans Condensed Light", "Open Sans Condensed", "Lato", sans-serif;
  -webkit-text-stroke: 1px currentColor;
}

/* Explorer window */
.window {
  position: absolute;
  left: 283px;
  right: 211px;
  top: 14px;
  bottom: 73px;
  display: flex;
  flex-direction: column;
  background: #fff;
  border-left: 1px solid #cdefff;
  box-shadow: 0 0 3px rgba(0, 40, 100, .35);
}
.titlebar { display: flex; align-items: center; height: 31px; padding-left: 8px; }
.titlebar .bar { width: 1px; height: 13px; background: #a5a5a5; margin: 0 8px 0 7px; }
.qa { margin-right: 7px; }
.qb { margin-right: 6px; }
.winbtns { display: flex; margin-left: auto; margin-right: 1px; align-self: stretch; }
.winbtns button { width: 46px; }
.tabs { display: flex; height: 23px; align-items: stretch; }
.tab { width: 57px; color: #333; }
.tab.file { width: 56px; background: #0063b1; color: #fff; }
.tab.active { width: 58px; background: #f5f6f7; border: 1px solid #dadbdc; border-bottom: 0; }
.collapse { color: #999; margin-right: 9px; }
.help { align-self: center; width: 16px; height: 16px; margin-right: 4px; border-radius: 50%; background: #0a62b8; color: #fff; font-weight: 700; line-height: 16px; }

/* Ribbon */
.ribbon {
  display: flex;
  height: 93px;
  background: #f5f6f7;
  border-top: 1px solid #dadbdc;
  border-bottom: 1px solid #dadbdc;
  font-size: 11px;
}
.group { display: flex; flex-direction: column; border-right: 1px solid #e2e3e4; margin: 3px 0 0; }
.clip { width: 263px; padding-left: 6px; }
.org { width: 165px; padding-left: 8px; }
.new { width: 84px; padding-left: 4px; }
.open { width: 132px; }
.sel { width: 115px; padding-left: 7px; }
.tools { display: flex; flex: none; height: 71px; }
.title { text-align: center; color: #444; line-height: 16px; padding-right: 6px; }
.big { display: flex; flex-direction: column; align-items: center; justify-content: flex-start; line-height: 13px; padding-top: 4px; white-space: nowrap; color: #222; }
.big svg { margin-bottom: 3px; }
.big .drop { margin: 6px 0 0; }
.w66 { width: 66px; }
.w42 { width: 42px; }
.w60 { width: 60px; }
.off, .big.off { color: #777; }
.stack { display: flex; flex-direction: column; padding: 1px 0 0 4px; }
.small { display: flex; align-items: center; gap: 3px; height: 22px; white-space: nowrap; }
.tight { gap: 0; }
.flush { padding-left: 0; }
.wide { padding: 9px 0 0; gap: 7px; width: 78px; }
.ruled { border-left: 1px solid #e2e3e4; padding-left: 6px; }
.drop { border: 3px solid transparent; border-top-color: #222; border-bottom: 0; margin-left: 2px; }
.pale { border-top-color: #b5b9bd; }

/* Address bar */
.address { display: flex; align-items: center; height: 34px; padding: 0 13px 0 12px; color: #555; }
.arr { width: 14px; margin-right: 16px; }
.arr.dim { color: #ccc; }
.recent { margin-right: 10px; margin-left: -3px; }
.up { width: 12px; margin-right: 7px; }
.crumbs { flex: 1; display: flex; align-items: center; height: 22px; border: 1px solid #d9d9d9; padding-left: 2px; margin-right: 11px; }
.crumbs a { color: #000; margin: 0 5px 0 7px; }
.crumbs .i16 { margin-right: 6px; }
.hist { width: 14px; }
.refresh { width: 19px; align-self: stretch; border-left: 1px solid #d9d9d9; }
.find { display: flex; align-items: center; width: 202px; height: 22px; border: 1px solid #d9d9d9; padding: 0 8px; }
.find input { flex: 1; min-width: 0; outline: 0; }
input::placeholder { color: #6d6d6d; opacity: 1; }

/* Tree and file list */
.content { flex: 1; min-height: 0; display: flex; padding-top: 1px; }
.tree { width: 140px; overflow: hidden; }
.tree a { display: flex; align-items: center; height: 24px; gap: 5px; white-space: nowrap; }
.tree .l0 { padding-left: 24px; margin-top: 8px; }
.tree .l1 { padding-left: 32px; }
.tree .l2 { padding-left: 40px; }
.tree .on { background: #d9d9d9; }
.pin { width: 12px; height: 12px; margin-left: auto; margin-right: 3px; }
.vscroll { width: 16px; display: flex; flex-direction: column; background: #f0f0f0; color: #505050; }
.vscroll button { height: 17px; }
.track { flex: 1; padding-top: 15px; }
.vscroll .thumb { height: 119px; background: #cdcdcd; }
.files { flex: 1; min-width: 0; margin-left: 4px; display: flex; flex-direction: column; }
.listing { flex: 1; min-height: 0; overflow: hidden; }
table { width: 100%; table-layout: fixed; border-collapse: collapse; }
.c-edge { width: 14px; }
.c-date { width: 144px; }
.c-type { width: 120px; }
.c-size { width: 77px; }
.c-gap { width: 3px; }
.c-end { width: 10px; }
thead th { height: 31px; padding: 0 0 4px 7px; font-weight: 400; text-align: left; color: #4c607a; }
thead .hname { position: relative; padding-left: 3px; }
.sort { position: absolute; top: -2px; left: 124px; color: #888; }
thead th:first-child, thead th:nth-child(n + 6) { padding: 0; }
.sep { background: linear-gradient(#e3e6e8, #e3e6e8) left top / 1px 26px no-repeat; }
.ghead th { padding: 0 0 1px; height: 28px; font-weight: 400; }
.ghead button { display: flex; align-items: center; width: 100%; height: 27px; border: 1px solid #a5cce6; border-right: 0; padding: 0 8px 2px 4px; gap: 4px; color: #1e3287; font-size: 15px; }
.ghead svg { color: #777; }
.ghead i { flex: 1; height: 1px; background: #dde3ee; margin-left: 4px; }
td { height: 21px; padding: 0 4px 0 7px; color: #64748a; white-space: nowrap; font-size: 11px; }
td:nth-child(n + 2):nth-child(-n + 5) { background: #cce8ff; border-bottom: 1px solid #a9d3f5; }
td:nth-child(2) { color: #000; padding-left: 5px; font-size: 12px; }
td:nth-child(5) { text-align: right; }
td:first-child, td:nth-child(n + 6) { padding: 0; }
.fi { display: inline-block; width: 14px; height: 16px; margin-right: 5px; vertical-align: -3px; }
.hscroll { display: flex; height: 15px; background: #f0f0f0; color: #505050; margin: 0 1px 1px 0; }
.hscroll button { width: 17px; }
.hscroll button:last-child { width: 19px; }
.hscroll .thumb { flex: 1; background: #cdcdcd; }
.status { display: flex; align-items: center; height: 24px; padding: 0 5px 0 14px; color: #243f63; font-size: 11px; }
.count { margin-right: 22px; }
.chosen { margin-right: 7px; }
.view { width: 22px; height: 22px; display: flex; align-items: center; justify-content: center; }
.view.active { background: #cce8ff; border: 1px solid #4fa8dd; }

/* Taskbar */
.taskbar { display: flex; height: 40px; color: #fff; background: linear-gradient(90deg, #001a24, #00131d 50%, #00040f); }
.tb { width: 48px; display: flex; align-items: center; justify-content: center; margin-right: 1px; }
.start { margin-right: 0; }
.view3 { margin-right: 3px; }
.running { background: #2f4650; border-bottom: 2px solid #76b9ed; }
.search { display: flex; align-items: center; width: 288px; background: #f2f2f2; border-top: 1px solid #cfcfcf; border-bottom: 1px solid #cfcfcf; padding: 0 4px 0 11px; color: #222; gap: 10px; }
.search input { flex: 1; min-width: 0; outline: 0; font-size: 14px; }
.search input::placeholder { color: #333; }
.lily { align-self: flex-end; }
.tray { width: 24px; display: flex; align-items: center; justify-content: center; }
.clock { width: 64px; line-height: 18px; text-align: center; white-space: nowrap; }
.notes { width: 49px; display: flex; align-items: center; justify-content: center; padding-right: 9px; margin: 0 3px 0 1px; border-right: 1px solid #5a626b; }
```
